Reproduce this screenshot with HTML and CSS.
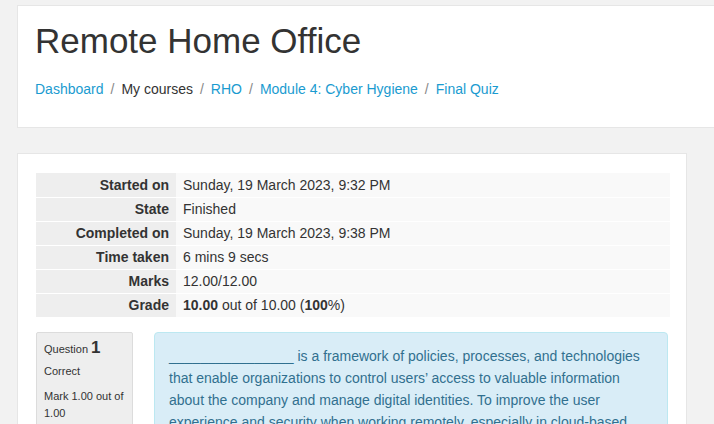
FILE: index.html
```html
<!DOCTYPE html>
<html>
<head>
<meta charset="utf-8">
<link rel="stylesheet" href="styles.css">
</head>
<body>
<header class="page-header">
  <h1 class="title">Remote Home Office</h1>
  <nav class="crumbs">
    <a href="#">Dashboard</a><span class="sep">/</span><span class="plain">My courses</span><span class="sep">/</span><a href="#">RHO</a><span class="sep">/</span><a href="#">Module 4: Cyber Hygiene</a><span class="sep">/</span><a href="#">Final Quiz</a>
  </nav>
</header>
<main class="card">
  <table class="summary">
    <tr><th>Started on</th><td>Sunday, 19 March 2023, 9:32 PM</td></tr>
    <tr><th>State</th><td>Finished</td></tr>
    <tr><th>Completed on</th><td>Sunday, 19 March 2023, 9:38 PM</td></tr>
    <tr><th>Time taken</th><td>6 mins 9 secs</td></tr>
    <tr><th>Marks</th><td>12.00/12.00</td></tr>
    <tr><th>Grade</th><td><b>10.00</b> out of 10.00 (<b>100</b>%)</td></tr>
  </table>
  <div class="que">
    <div class="info">
      <div class="qno">Question <span class="num">1</span></div>
      <div class="state">Correct</div>
      <div class="grade">Mark 1.00 out of 1.00</div>
    </div>
    <div class="formulation">
      <p>________________ is a framework of policies, processes, and technologies that enable organizations to control users’ access to valuable information about the company and manage digital identities. To improve the user experience and security when working remotely, especially in cloud-based environments, organizations need a strong solution.</p>
    </div>
  </div>
</main>
</body>
</html>
```
FILE: styles.css
```css
html, body {
  margin: 0;
  padding: 0;
}
body {
  background: #f2f2f2;
  font-family: "Liberation Sans", Arial, sans-serif;
  color: #333;
  font-size: 14px;
  overflow: hidden;
}
.page-header {
  margin: 5px -2px 0 17px;
  height: 121px;
  background: #fff;
  border: 1px solid #e6e6e6;
  padding: 0 0 0 17px;
}
.title {
  margin: 14px 0 0 0;
  font-size: 35px;
  font-weight: normal;
  line-height: 42px;
  color: #333;
}
.crumbs {
  margin-top: 17px;
  font-size: 14px;
  line-height: 20px;
}
.crumbs a {
  color: #1a9bd0;
  text-decoration: none;
}
.crumbs .plain {
  color: #333;
}
.crumbs .sep {
  color: #888;
  padding: 0 7px;
}
.card {
  display: block;
  margin: 25px 0 0 17px;
  width: 632px;
  background: #fff;
  border: 1px solid #e6e6e6;
  padding: 19px 18px 40px 18px;
}
.summary {
  width: 634px;
  border-collapse: collapse;
  font-size: 14px;
}
.summary tr {
  height: 24px;
  border-top: 1px solid #fff;
}
.summary tr:first-child {
  border-top: 0;
}
.summary th {
  width: 133px;
  background: #eeeeee;
  text-align: right;
  padding: 0 7px 0 0;
  font-weight: bold;
  color: #333;
}
.summary td {
  background: #f9f9f9;
  padding: 0 0 0 7px;
  color: #333;
}
.que {
  display: flex;
  margin-top: 15px;
  gap: 21px;
}
.info {
  width: 81px;
  flex: none;
  background: #eeeeee;
  border: 1px solid #dcdcdc;
  border-radius: 2px;
  padding: 6px 7px 10px 7px;
  font-size: 11px;
  line-height: 17px;
  color: #333;
  height: 200px;
}
.qno {
  line-height: 17px;
  height: 17px;
  margin-bottom: 7px;
}
.qno .num {
  font-size: 17px;
  font-weight: bold;
  line-height: 17px;
}
.state {
  margin-bottom: 8px;
}
.formulation {
  flex: 1;
  background: #d9edf7;
  border: 1px solid #bce8f1;
  border-radius: 4px;
  padding: 12px 14px;
  color: #31708f;
  font-size: 14px;
  line-height: 22px;
}
.formulation p {
  margin: 0;
}
```
